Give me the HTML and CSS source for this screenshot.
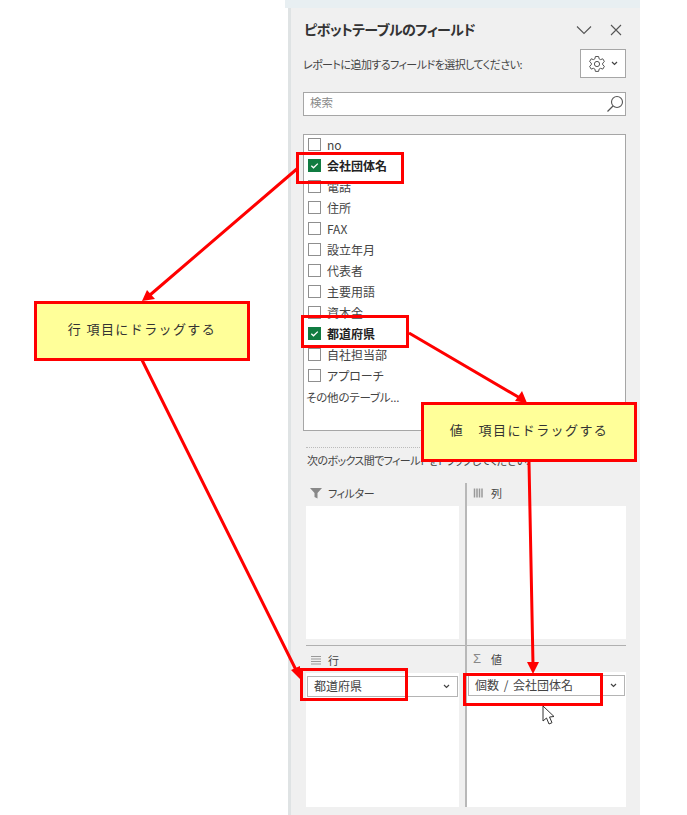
FILE: index.html
```html
<!DOCTYPE html>
<html lang="ja">
<head>
<meta charset="utf-8">
<title>ピボットテーブルのフィールド</title>
<link rel="stylesheet" href="styles.css">
</head>
<body>
<div class="stage">
  <aside class="pane">
    <div class="pane-top"></div>
    <div class="pane-body">
      <header class="title-row">
        <h1 class="title">ピボットテーブルのフィールド</h1>
        <svg class="ctl ctl-chev" width="16" height="10" viewBox="0 0 16 10"><path d="M1 1.5 8 8.5 15 1.5" fill="none" stroke="#555" stroke-width="1.1"/></svg>
        <svg class="ctl" width="12" height="12" viewBox="0 0 12 12"><path d="M1 1 11 11M11 1 1 11" fill="none" stroke="#555" stroke-width="1.1"/></svg>
      </header>
      <div class="prompt-row">
        <span class="prompt">レポートに追加するフィールドを選択してください:</span>
        <div class="gear-btn">
          <svg width="18" height="18" viewBox="0 0 18 18"><path d="M7.4 1.5h3.2l.5 2.3 1.5.8 2.2-.8 1.6 2.8-1.7 1.5v1.7l1.7 1.5-1.6 2.8-2.2-.8-1.5.8-.5 2.3H7.4l-.5-2.3-1.5-.8-2.2.8-1.6-2.8 1.7-1.5V8.1L1.6 6.6l1.6-2.8 2.2.8 1.5-.8z" fill="none" stroke="#555" stroke-width="1"/><circle cx="9" cy="9" r="2.6" fill="none" stroke="#555" stroke-width="1"/></svg>
          <svg width="7" height="5" viewBox="0 0 7 5"><path d="M1 1 3.5 3.5 6 1" fill="none" stroke="#444" stroke-width="1.2"/></svg>
        </div>
      </div>
      <div class="search">
        <span class="search-text">検索</span>
        <svg width="18" height="18" viewBox="0 0 18 18"><circle cx="11" cy="7" r="5.5" fill="none" stroke="#555" stroke-width="1.1"/><path d="M7 11 1.5 16.5" stroke="#555" stroke-width="1.3"/></svg>
      </div>
      <ul class="fields">
        <li class="field"><span class="box"></span>no</li>
        <li class="field on"><span class="box"><svg width="13" height="13" viewBox="0 0 13 13"><path d="M3.3 6.7 5.5 8.8 9.8 4.6" fill="none" stroke="#fff" stroke-width="1.3"/></svg></span>会社団体名</li>
        <li class="field"><span class="box"></span>電話</li>
        <li class="field"><span class="box"></span>住所</li>
        <li class="field"><span class="box"></span>FAX</li>
        <li class="field"><span class="box"></span>設立年月</li>
        <li class="field"><span class="box"></span>代表者</li>
        <li class="field"><span class="box"></span>主要用語</li>
        <li class="field"><span class="box"></span>資本金</li>
        <li class="field on"><span class="box"><svg width="13" height="13" viewBox="0 0 13 13"><path d="M3.3 6.7 5.5 8.8 9.8 4.6" fill="none" stroke="#fff" stroke-width="1.3"/></svg></span>都道府県</li>
        <li class="field"><span class="box"></span>自社担当部</li>
        <li class="field"><span class="box"></span>アプローチ</li>
        <li class="more">その他のテーブル...</li>
      </ul>
      <div class="dots"></div>
      <p class="hint">次のボックス間でフィールドをドラッグしてください:</p>
      <div class="areas">
        <section class="area area-filter">
          <h2 class="area-head">
            <svg width="12" height="12" viewBox="0 0 12 12"><path d="M0 1h12L7.5 6v5.5L4.5 10V6z" fill="#888"/></svg>フィルター
          </h2>
          <div class="well"></div>
        </section>
        <section class="area area-col">
          <h2 class="area-head">
            <svg width="12" height="12" viewBox="0 0 12 12"><path d="M1.5 1.500v9M4 1.500v9M6.500 1.500v9M9 1.500v9" stroke="#999" stroke-width="1.500"/></svg>列
          </h2>
          <div class="well"></div>
        </section>
        <section class="area area-row">
          <h2 class="area-head">
            <svg width="12" height="12" viewBox="0 0 12 12"><path d="M1 2.500h10M1 5h10M1 7.500h10M1 10h10" stroke="#999" stroke-width="1"/></svg>行
          </h2>
          <div class="well well-low">
            <div class="pill"><span>都道府県</span><svg width="7" height="5" viewBox="0 0 7 5"><path d="M1 1 3.500 3.500 6 1" fill="none" stroke="#444" stroke-width="1.200"/></svg></div>
          </div>
        </section>
        <section class="area area-val">
          <h2 class="area-head">
            <span class="sigma">Σ</span>値
          </h2>
          <div class="well well-low">
            <div class="pill"><span>個数 / 会社団体名</span><svg width="7" height="5" viewBox="0 0 7 5"><path d="M1 1 3.500 3.500 6 1" fill="none" stroke="#444" stroke-width="1.200"/></svg></div>
          </div>
        </section>
      </div>
    </div>
  </aside>

  <svg class="marks" width="687" height="815" viewBox="0 0 687 815">
    <g fill="none" stroke="#f00" stroke-width="3">
      <rect x="297.500" y="153.500" width="105" height="29"/>
      <rect x="302.500" y="316.500" width="105" height="30"/>
      <rect x="301.500" y="669.500" width="105" height="30"/>
      <rect x="464.500" y="674.500" width="137" height="30"/>
      <path d="M298 168 150 295M142 360 297 672M409 333 520 398M529 462 533 664"/>
    </g>
    <g fill="#f00">
      <path d="M142 301 147 290 155 299z"/>
      <path d="M300 679 291 670 300 666z"/>
      <path d="M527 403 515 401 522 391z"/>
      <path d="M533 674 527 662 539 662z"/>
    </g>
    <path d="M543 706V721L546.500 718 549 724 552 722.700 549.500 717 554 716.500z" fill="#fff" stroke="#333" stroke-width="1"/>
  </svg>
  <div class="note note-row">行 項目にドラッグする</div>
  <div class="note note-val">値　項目にドラッグする</div>
</div>
</body>
</html>
```
FILE: styles.css
```css
* { box-sizing: border-box; }
html, body { margin: 0; padding: 0; background: #fff; }
body { font-family: "Noto Sans CJK JP", "Noto Sans", sans-serif; color: #333; }
.stage { position: relative; width: 687px; height: 815px; overflow: hidden; }

.pane { margin-left: 285px; width: 355px; height: 815px; display: flex; flex-direction: column; }
.pane-top { height: 8px; background: #e8eff2; flex: none; }
.pane-body {
  flex: 1;
  background: #f0f0f0;
  margin-left: 3px;
  border-left: 3px solid #dfe3e4;
  padding: 0 14px 0 12px;
  display: flex;
  flex-direction: column;
}

.title-row { height: 29px; margin-top: 7px; display: flex; align-items: center; gap: 17px; }
.title { flex: 1; margin: 0 0 0 1px; font-size: 14px; font-weight: 700; line-height: 29px; color: #333; font-feature-settings: "palt"; letter-spacing: -0.600px; }
.ctl { flex: none; margin-top: 0; }
.ctl-chev { margin-right: 1px; }
.title-row .ctl:last-child { margin-right: 4px; }

.prompt-row { display: flex; align-items: center; justify-content: space-between; margin-top: 5px; height: 29px; padding-left: 0; }
.prompt { font-size: 11px; letter-spacing: -0.550px; color: #444; white-space: nowrap; font-feature-settings: "palt"; }
.gear-btn { width: 46px; height: 29px; background: #fff; border: 1px solid #a6a6a6; display: flex; align-items: center; justify-content: center; gap: 5px; }

.search { margin: 14px 0 0 0; height: 24px; background: #fff; border: 1px solid #a6a6a6; display: flex; align-items: center; justify-content: space-between; padding: 0 1px 0 6px; }
.search-text { font-size: 11.500px; color: #8a8a8a; margin-top: -5px; }

.fields { list-style: none; margin: 18px 0 0 0; padding: 0; height: 297px; background: #fff; border: 1px solid #a6a6a6; }
.field { height: 21px; display: flex; align-items: center; font-size: 12px; color: #444; padding-left: 4px; font-feature-settings: "palt"; }
.field:first-child { margin-top: -1px; }
.box { width: 13px; height: 13px; border: 1px solid #8f8f8f; background: #fff; margin-right: 6px; flex: none; position: relative; }
.on { font-weight: 700; color: #222; }
.on .box { background: #107c41; border-color: #107c41; }
.on .box svg { position: absolute; left: -1px; top: -1px; }
.more { font-size: 11.500px; letter-spacing: -0.200px; color: #444; height: 22px; line-height: 22px; padding-left: 2px; font-feature-settings: "palt"; }

.dots { margin: 16px 0 0 3px; border-top: 1px dotted #bbb; height: 1px; }
.hint { margin: 2px 0 0 4px; height: 20px; line-height: 20px; font-size: 11px; letter-spacing: -0.600px; color: #444; white-space: nowrap; font-feature-settings: "palt"; }

.areas {
  margin: 13px 0 8px 3px;
  flex: 1;
  display: grid;
  grid-template-columns: 160px 160px;
  grid-template-rows: 162px 162px;
}
.area { display: flex; flex-direction: column; min-height: 0; }
.area-col, .area-val { border-left: 2px solid #b8b8b8; padding-left: 0; margin-left: -1px; }
.area-filter, .area-row { padding-right: 7px; }
.area-row, .area-val { padding-top: 4px; }
.area-row { border-top: 1px solid #b0b0b0; margin-right: 0; }
.area-val { position: relative; }
.area-val::before { content: ""; position: absolute; left: 0; right: 0; top: 0; border-top: 1px solid #b0b0b0; }
.area-head { margin: 0; height: 23px; flex: none; display: flex; align-items: center; gap: 6px; padding: 0 0 4px 4px; font-size: 11px; letter-spacing: -0.400px; font-weight: 400; color: #444; font-feature-settings: "palt"; }
.area-col .area-head, .area-val .area-head { padding-left: 6px; }
.sigma { color: #888; font-size: 13px; width: 12px; font-family: "Liberation Sans", sans-serif; }
.well { flex: 1; background: #fff; margin-bottom: 6px; }
.area-col .well, .area-val .well { margin-left: 0; }
.well-low { margin-bottom: 0; padding: 3px 1px; }
.pill { height: 21px; border: 1px solid #b4b4b4; background: #fff; display: flex; align-items: center; justify-content: space-between; padding: 0 7px 2px 6px; font-size: 12px; color: #444; word-spacing: 2px; }
.pill svg { margin-top: 2px; }

.marks { position: absolute; left: 0; top: 0; pointer-events: none; }
.note { position: absolute; background: #ffff99; border: 3px solid #f00; display: flex; align-items: center; justify-content: center; padding-bottom: 6px; font-size: 13px; color: #333; letter-spacing: 1.400px; }
.note-row { left: 34px; top: 301px; width: 216px; height: 60px; }
.note-val { left: 421px; top: 402px; width: 216px; height: 60px; }
```
